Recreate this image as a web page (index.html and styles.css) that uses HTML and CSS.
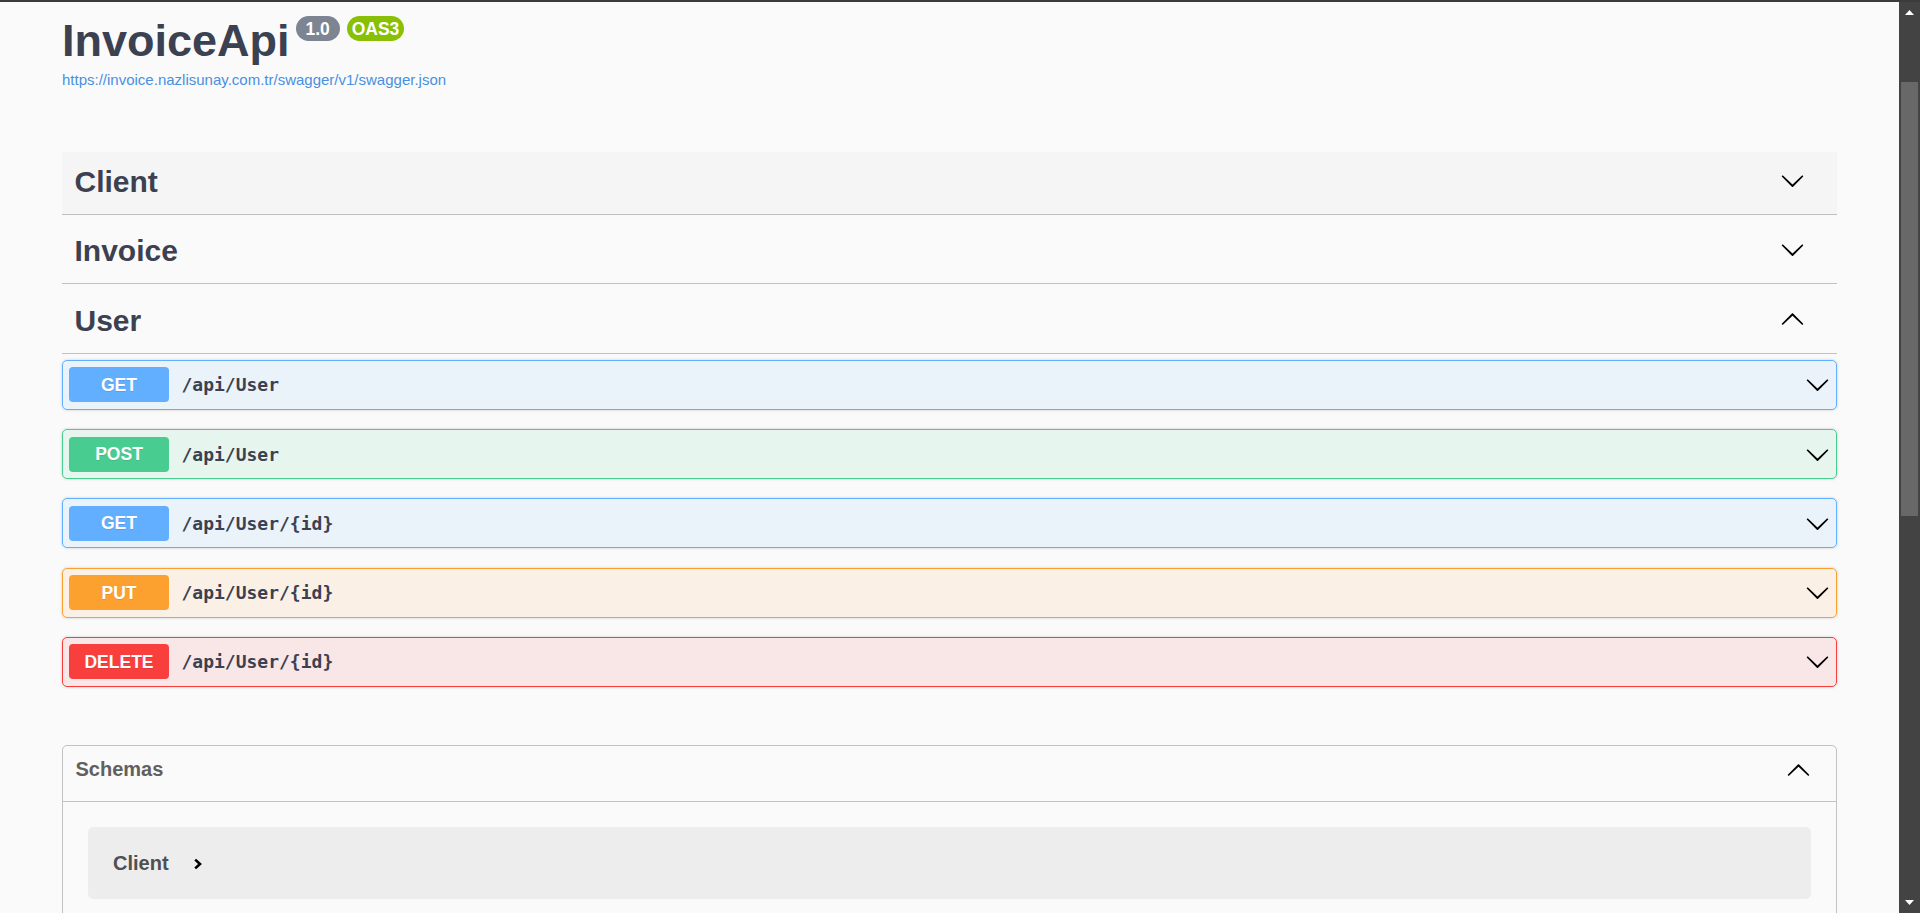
FILE: index.html
```html
<!DOCTYPE html>
<html lang="en">
<head>
<meta charset="utf-8">
<title>InvoiceApi</title>
<link rel="stylesheet" href="styles.css">
</head>
<body>
<div class="window">
  <div class="viewport">
    <div class="wrapper">
      <div class="info">
        <div class="title-row">
          <h2 class="title">InvoiceApi</h2>
          <span class="badge badge-version"> 1.0 </span>
          <span class="badge badge-oas">OAS3</span>
        </div>
        <a class="spec-link" href="#">https://invoice.nazlisunay.com.tr/swagger/v1/swagger.json</a>
      </div>

      <div class="tag-list">
        <div class="tag tag-active">
          <h3 class="tag-name">Client</h3>
          <svg class="arrow tag-arrow" viewBox="0 0 20 20"><path d="M17.418 6.109c.272-.268.709-.268.979 0s.271.701 0 .969l-7.908 7.83c-.27.268-.707.268-.979 0l-7.908-7.83c-.27-.268-.27-.701 0-.969.271-.268.709-.268.979 0L10 13.25l7.418-7.141z"/></svg>
        </div>
        <div class="tag">
          <h3 class="tag-name">Invoice</h3>
          <svg class="arrow tag-arrow" viewBox="0 0 20 20"><path d="M17.418 6.109c.272-.268.709-.268.979 0s.271.701 0 .969l-7.908 7.83c-.27.268-.707.268-.979 0l-7.908-7.83c-.27-.268-.27-.701 0-.969.271-.268.709-.268.979 0L10 13.25l7.418-7.141z"/></svg>
        </div>
        <div class="tag">
          <h3 class="tag-name">User</h3>
          <svg class="arrow tag-arrow" viewBox="0 0 20 20"><path transform="rotate(180 10 10.5)" d="M17.418 6.109c.272-.268.709-.268.979 0s.271.701 0 .969l-7.908 7.83c-.27.268-.707.268-.979 0l-7.908-7.83c-.27-.268-.27-.701 0-.969.271-.268.709-.268.979 0L10 13.25l7.418-7.141z"/></svg>
        </div>

        <div class="ops">
          <div class="op op-get">
            <span class="method">GET</span>
            <span class="path">/api/User</span>
            <svg class="arrow op-arrow" viewBox="0 0 20 20"><path d="M17.418 6.109c.272-.268.709-.268.979 0s.271.701 0 .969l-7.908 7.83c-.27.268-.707.268-.979 0l-7.908-7.83c-.27-.268-.27-.701 0-.969.271-.268.709-.268.979 0L10 13.25l7.418-7.141z"/></svg>
          </div>
          <div class="op op-post">
            <span class="method">POST</span>
            <span class="path">/api/User</span>
            <svg class="arrow op-arrow" viewBox="0 0 20 20"><path d="M17.418 6.109c.272-.268.709-.268.979 0s.271.701 0 .969l-7.908 7.83c-.27.268-.707.268-.979 0l-7.908-7.83c-.27-.268-.27-.701 0-.969.271-.268.709-.268.979 0L10 13.25l7.418-7.141z"/></svg>
          </div>
          <div class="op op-get">
            <span class="method">GET</span>
            <span class="path">/api/User/{id}</span>
            <svg class="arrow op-arrow" viewBox="0 0 20 20"><path d="M17.418 6.109c.272-.268.709-.268.979 0s.271.701 0 .969l-7.908 7.83c-.27.268-.707.268-.979 0l-7.908-7.83c-.27-.268-.27-.701 0-.969.271-.268.709-.268.979 0L10 13.25l7.418-7.141z"/></svg>
          </div>
          <div class="op op-put">
            <span class="method">PUT</span>
            <span class="path">/api/User/{id}</span>
            <svg class="arrow op-arrow" viewBox="0 0 20 20"><path d="M17.418 6.109c.272-.268.709-.268.979 0s.271.701 0 .969l-7.908 7.83c-.27.268-.707.268-.979 0l-7.908-7.83c-.27-.268-.27-.701 0-.969.271-.268.709-.268.979 0L10 13.25l7.418-7.141z"/></svg>
          </div>
          <div class="op op-delete">
            <span class="method">DELETE</span>
            <span class="path">/api/User/{id}</span>
            <svg class="arrow op-arrow" viewBox="0 0 20 20"><path d="M17.418 6.109c.272-.268.709-.268.979 0s.271.701 0 .969l-7.908 7.83c-.27.268-.707.268-.979 0l-7.908-7.83c-.27-.268-.27-.701 0-.969.271-.268.709-.268.979 0L10 13.25l7.418-7.141z"/></svg>
          </div>
        </div>
      </div>

      <section class="models">
        <div class="models-head">
          <h4 class="models-title">Schemas</h4>
          <svg class="arrow models-arrow" viewBox="0 0 20 20"><path transform="rotate(180 10 10.5)" d="M17.418 6.109c.272-.268.709-.268.979 0s.271.701 0 .969l-7.908 7.83c-.27.268-.707.268-.979 0l-7.908-7.83c-.27-.268-.27-.701 0-.969.271-.268.709-.268.979 0L10 13.25l7.418-7.141z"/></svg>
        </div>
        <div class="models-body">
          <div class="model-container">
            <span class="model-title">Client</span>
            <svg class="model-toggle" viewBox="0 0 10 12"><polyline points="2.2,1.6 7,6 2.2,10.4"/></svg>
          </div>
        </div>
      </section>
    </div>
  </div>

  <div class="scrollbar">
    <div class="sb-button"><svg class="sb-tri" viewBox="0 0 9 5"><polygon points="4.5,0 9,5 0,5"/></svg></div>
    <div class="sb-track"><div class="sb-thumb"></div></div>
    <div class="sb-button"><svg class="sb-tri" viewBox="0 0 9 5"><polygon points="0,0 9,0 4.5,5"/></svg></div>
  </div>
</div>
</body>
</html>
```

FILE: styles.css
```css
html, body {
  margin: 0;
  padding: 0;
  height: 100%;
  overflow: hidden;
}

body {
  background: #3b3b3b;
  font-family: "Liberation Sans", Arial, sans-serif;
}

.window {
  display: flex;
  height: 911px;
  border-top: 2px solid #3b3b3b;
}

.viewport {
  flex: 1;
  overflow: hidden;
  background: #fafafa;
}

.wrapper {
  max-width: 1775px;
  margin: 0 auto;
}

/* ---------- info ---------- */
.info {
  padding-top: 13px;
}

.title-row {
  display: flex;
  align-items: flex-start;
}

.title {
  margin: 0;
  font-size: 45px;
  line-height: 52px;
  font-weight: 700;
  color: #3b4151;
}

.badge {
  display: block;
  margin: 1px 0 0 7px;
  padding: 2.5px 5px;
  border-radius: 60px;
  font-size: 17.5px;
  line-height: 20px;
  font-weight: 700;
  color: #fff;
  white-space: pre;
}

.badge-version {
  margin-left: 6px;
  background: #7d8492;
}

.badge-oas {
  background: #89bf04;
}

.spec-link {
  display: block;
  margin-top: 4px;
  font-size: 15px;
  line-height: 17px;
  color: #4990e2;
  text-decoration: none;
}

/* ---------- tags ---------- */
.tag-list {
  margin-top: 64px;
}

.tag {
  display: flex;
  align-items: center;
  box-sizing: border-box;
  height: 63px;
  padding: 11px 32px 14px 12.5px;
  margin-bottom: 6.25px;
  border-bottom: 1px solid rgba(59, 65, 81, 0.3);
}

.tag-active {
  background: rgba(0, 0, 0, 0.02);
}

.tag-name {
  flex: 1;
  margin: 0;
  font-size: 30px;
  line-height: 35px;
  font-weight: 700;
  color: #3b4151;
}

.arrow {
  width: 25px;
  height: 25px;
  flex: none;
  fill: #000;
}

.tag-arrow {
  margin-bottom: 3px;
}

/* ---------- operations ---------- */
.ops {
  padding-bottom: 0.1px;
}

.op {
  display: flex;
  align-items: center;
  box-sizing: border-box;
  height: 50px;
  padding: 6.5px 6px;
  margin-bottom: 19.25px;
  border: 1px solid;
  border-radius: 5px;
  box-shadow: 0 0 3px rgba(0, 0, 0, 0.19);
}

.method {
  box-sizing: border-box;
  min-width: 100px;
  padding: 7.5px 0;
  border-radius: 4px;
  font-size: 17.5px;
  line-height: 20px;
  font-weight: 700;
  text-align: center;
  color: #fff;
  text-shadow: 0 1px 0 rgba(0, 0, 0, 0.1);
}

.path {
  flex: 1;
  padding: 0 12.5px;
  font-family: "DejaVu Sans Mono", "Liberation Mono", monospace;
  font-size: 18px;
  font-weight: 700;
  color: #3b4151;
}

.op-get {
  border-color: #61affe;
  background: rgba(97, 175, 254, 0.1);
}
.op-get .method { background: #61affe; }

.op-post {
  border-color: #49cc90;
  background: rgba(73, 204, 144, 0.1);
}
.op-post .method { background: #49cc90; }

.op-put {
  border-color: #fca130;
  background: rgba(252, 161, 48, 0.1);
}
.op-put .method { background: #fca130; }

.op-delete {
  border-color: #f93e3e;
  background: rgba(249, 62, 62, 0.1);
}
.op-delete .method { background: #f93e3e; }

/* ---------- models ---------- */
.models {
  margin-top: 39px;
  min-height: 400px;
  border: 1px solid rgba(59, 65, 81, 0.3);
  border-radius: 5px;
}

.models-head {
  display: flex;
  align-items: center;
  padding: 11px 25px 19px 12.5px;
  border-bottom: 1px solid rgba(59, 65, 81, 0.3);
}

.models-title {
  flex: 1;
  margin: 0;
  font-size: 20px;
  line-height: 23px;
  font-weight: 700;
  color: #606060;
}

.models-body {
  padding-top: 25px;
}

.model-container {
  display: flex;
  align-items: center;
  height: 72px;
  margin: 0 25px 19px;
  padding: 0 25px;
  border-radius: 5px;
  background: rgba(0, 0, 0, 0.05);
}

.model-title {
  font-size: 20px;
  font-weight: 700;
  color: #505050;
}

.model-toggle {
  width: 10px;
  height: 12px;
  margin: 2px 0 0 24px;
  fill: none;
  stroke: #000;
  stroke-width: 2.6;
}

/* ---------- scrollbar ---------- */
.scrollbar {
  display: flex;
  flex-direction: column;
  width: 21px;
  flex: none;
  background: #434343;
}

.sb-button {
  display: flex;
  align-items: center;
  justify-content: center;
  height: 21px;
  flex: none;
}

.sb-tri {
  width: 9px;
  height: 5px;
  fill: #fff;
}

.sb-track {
  flex: 1;
  padding: 0 2px;
}

.sb-thumb {
  height: 434px;
  margin-top: 59px;
  background: #686868;
}
```
